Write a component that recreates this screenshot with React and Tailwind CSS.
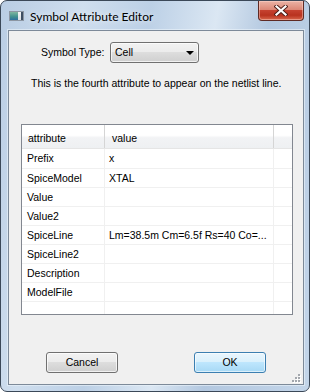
const rows = [
    ['Prefix', 'x'],
    ['SpiceModel', 'XTAL'],
    ['Value', ''],
    ['Value2', ''],
    ['SpiceLine', 'Lm=38.5m Cm=6.5f Rs=40 Co=...'],
    ['SpiceLine2', ''],
    ['Description', ''],
    ['ModelFile', ''],
];

function TitleIcon() {
    return (
        <div className="flex h-[10px] w-[15px] border border-[#8c96a3] bg-white">
            <div className="h-full w-[8px] bg-[linear-gradient(180deg,#7fb7a0,#3f8f8f_60%,#2f6f9f)]" />
            <div className="h-full flex-1 bg-[linear-gradient(180deg,#f4f6f8,#d9dee4)]" />
            <div className="h-full w-[2px] bg-[#3d4e63]" />
        </div>
    );
}

function CloseButton() {
    return (
        <div className="flex h-[20px] w-[46px] items-center justify-center rounded-b-[4px] border border-t-0 border-[#5e2a24] bg-[linear-gradient(180deg,#eab3a6_0%,#dc8877_45%,#c5412f_50%,#b8321f_75%,#d8664b_100%)] shadow-[inset_0_0_0_1px_rgba(255,220,210,0.45)]">
            <svg width="14" height="11" viewBox="0 0 14 11">
                <path d="M2.5 1.5 L11.5 9.5 M11.5 1.5 L2.5 9.5" stroke="#4a1c16" strokeWidth="4" strokeLinecap="square" />
                <path d="M2.5 1.5 L11.5 9.5 M11.5 1.5 L2.5 9.5" stroke="#ffffff" strokeWidth="2.2" strokeLinecap="square" />
            </svg>
        </div>
    );
}

function WinButton({ label, primary }) {
    return (
        <button
            type="button"
            className={`flex h-[21px] w-[72px] items-center justify-center rounded-[3px] border text-[10.5px] font-normal text-black ${
                primary
                    ? 'border-[#3c7fb1] bg-[linear-gradient(180deg,#eaf6fd_0%,#d9f0fc_50%,#bee6fd_50%,#a7d9f5_100%)] shadow-[inset_0_0_0_1px_rgba(255,255,255,0.6)]'
                    : 'border-[#707070] bg-[linear-gradient(180deg,#f2f2f2_0%,#ebebeb_50%,#dddddd_50%,#cfcfcf_100%)] shadow-[inset_0_0_0_1px_rgba(255,255,255,0.7)]'
            }`}
        >
            {label}
        </button>
    );
}

export default function App() {
    return (
        <div className="h-[392px] w-[310px] overflow-hidden bg-white font-['Liberation_Sans',Arial,sans-serif] text-[10.5px] leading-[13px] text-black">
            <div className="flex h-full w-full flex-col rounded-[7px] border border-[#3b4858] bg-[linear-gradient(100deg,#b9cde4_0%,#cfdeee_22%,#bcd0e6_40%,#dbe7f3_58%,#b3c8e0_72%,#c3d5e9_100%)]">
                <div className="flex h-[29px] items-start">
                    <div className="flex h-[29px] items-center pl-[8px] pt-px">
                        <TitleIcon />
                        <span className="ml-[6px] font-['Lato',sans-serif] text-[12px] [text-shadow:0_0_6px_rgba(255,255,255,0.9)]">
                            Symbol Attribute Editor
                        </span>
                    </div>
                    <div className="ml-auto mr-[5px]">
                        <CloseButton />
                    </div>
                </div>

                <div className="relative mb-[6px] ml-[7px] mr-[5px] flex flex-1 flex-col border border-[#7d8a99] bg-[#f0f0f0] shadow-[0_0_0_1px_rgba(235,243,250,0.6)]">
                    <div className="mt-[11px] flex h-[21px] items-center pl-[32px]">
                        <span className="w-[69px]">Symbol Type:</span>
                        <div className="flex h-[21px] w-[89px] items-center justify-between rounded-[3px] border border-[#707070] bg-[linear-gradient(180deg,#f2f2f2_0%,#ebebeb_50%,#dddddd_50%,#cfcfcf_100%)] pl-[4px] pr-[4px] shadow-[inset_0_0_0_1px_rgba(255,255,255,0.7)]">
                            <span>Cell</span>
                            <svg width="8" height="4" viewBox="0 0 8 4">
                                <path d="M0 0 H8 L4 4 Z" fill="#000" />
                            </svg>
                        </div>
                    </div>

                    <p className="mt-[14px] whitespace-nowrap pl-[22px]">This is the fourth attribute to appear on the netlist line.</p>

                    <div className="ml-[12px] mt-[34px] flex h-[191px] w-[272px] flex-col border border-[#828790] bg-white">
                        <div className="flex h-[24px] border-b border-[#e5e5e5] bg-[linear-gradient(180deg,#ffffff_0%,#ffffff_45%,#f2f3f5_55%,#eef0f2_100%)]">
                            <div className="w-[83px] border-r border-[#d5d5d5] pl-[6px] pt-[7px]">attribute</div>
                            <div className="w-[169px] border-r border-[#d5d5d5] pl-[7px] pt-[7px]">value</div>
                            <div className="mr-[2px] flex-1" />
                        </div>
                        {rows.map(([name, value], i) => (
                            <div
                                key={name}
                                className={`flex whitespace-nowrap border-b border-[#f0f0f0] ${i === 0 ? 'h-[20px]' : 'h-[19px]'}`}
                            >
                                <div className="flex w-[83px] items-center border-r border-[#f0f0f0] pl-[5px]">{name}</div>
                                <div className="flex w-[169px] items-center overflow-hidden border-r border-[#f0f0f0] pl-[4px]">{value}</div>
                                <div className="flex-1" />
                            </div>
                        ))}
                        <div className="flex flex-1">
                            <div className="w-[83px] border-r border-[#f0f0f0]" />
                            <div className="w-[169px] border-r border-[#f0f0f0]" />
                            <div className="flex-1" />
                        </div>
                    </div>

                    <div className="mt-[37px] flex">
                        <div className="ml-[37px]">
                            <WinButton label="Cancel" />
                        </div>
                        <div className="ml-[76px]">
                            <WinButton label="OK" primary />
                        </div>
                    </div>

                    <svg className="absolute bottom-[1px] right-[2px]" width="9" height="9" viewBox="0 0 9 9">
                        {[
                            [6, 0],
                            [3, 3],
                            [6, 3],
                            [0, 6],
                            [3, 6],
                            [6, 6],
                        ].map(([x, y]) => (
                            <g key={`${x}-${y}`}>
                                <rect x={x + 1} y={y + 1} width="2" height="2" fill="#ffffff" />
                                <rect x={x} y={y} width="2" height="2" fill="#a3a7ad" />
                            </g>
                        ))}
                    </svg>
                </div>
            </div>
        </div>
    );
}
